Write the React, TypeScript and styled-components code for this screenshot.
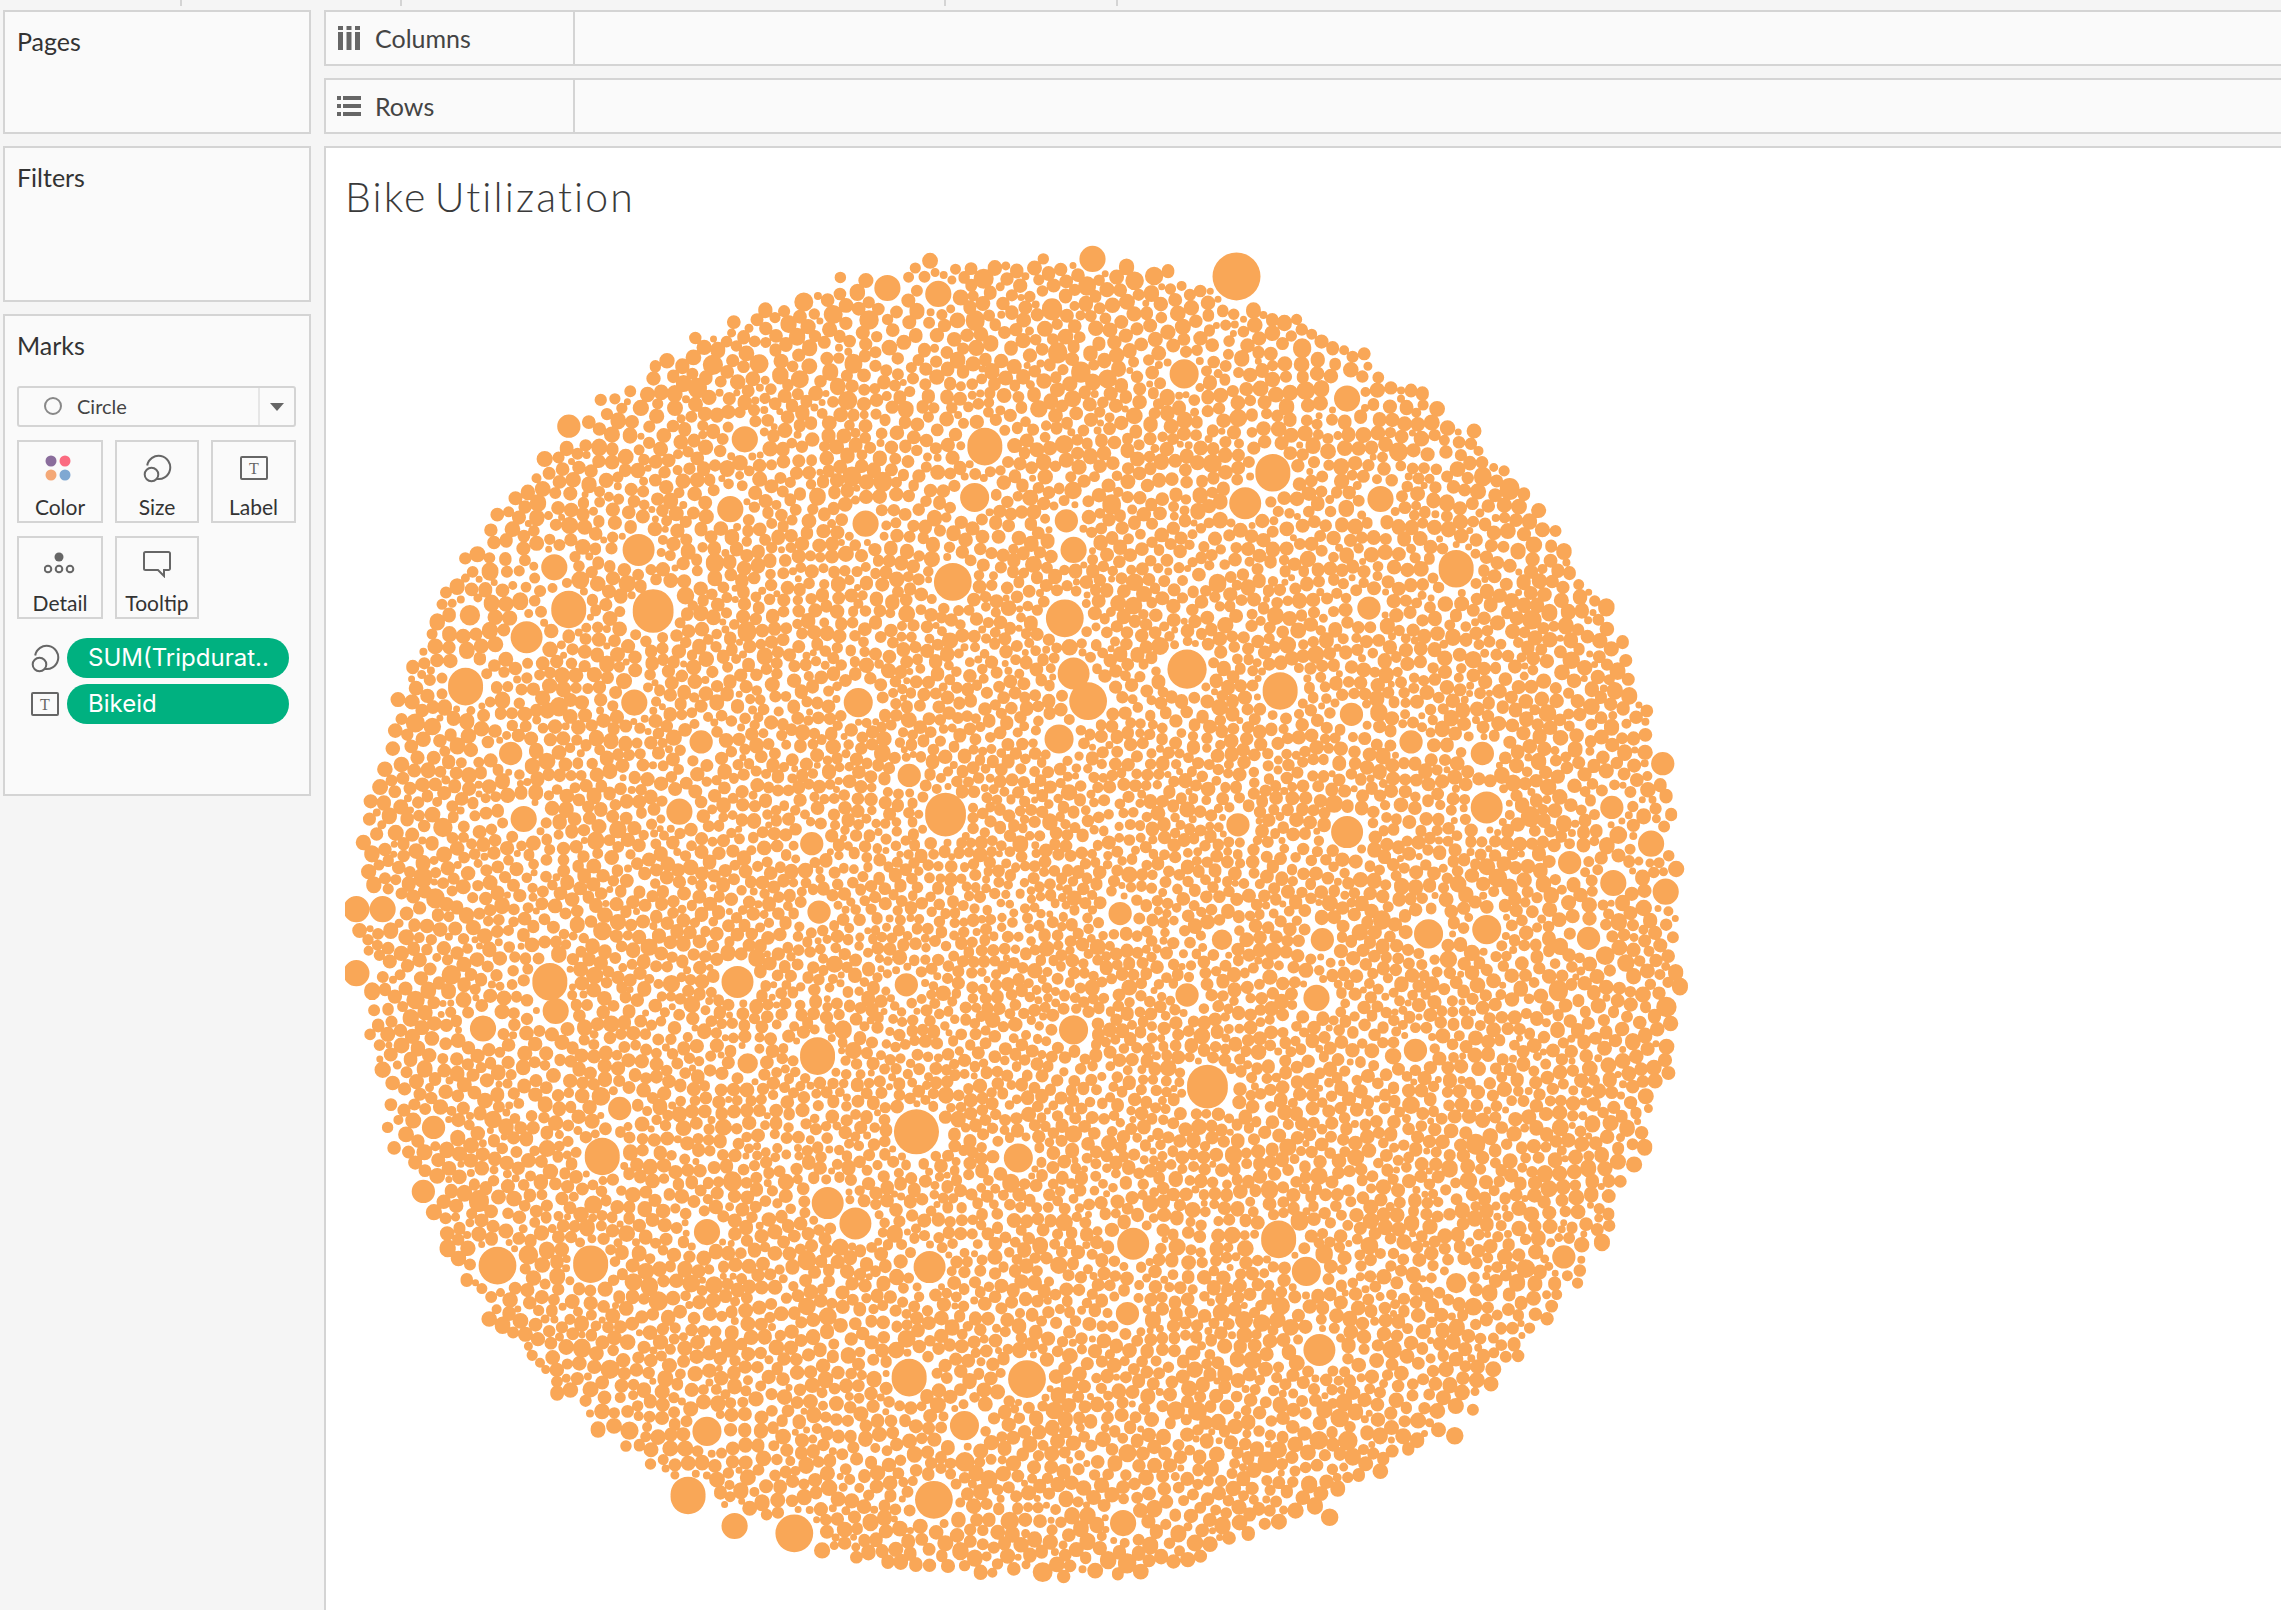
import { useMemo } from 'react';
import styled, { createGlobalStyle } from 'styled-components';

const GlobalStyle = createGlobalStyle`
    html, body {
        margin: 0;
        padding: 0;
        background: #f5f5f5;
        overflow: hidden;
    }
`;

const BORDER = '#d4d4d4';
const INK = '#333333';
const ICON = '#666666';
const ORANGE = '#f9a757';

const Page = styled.div`
    width: 2281px;
    height: 1610px;
    overflow: hidden;
    display: flex;
    flex-direction: column;
    background: #f5f5f5;
    font-family: Lato, 'Open Sans', sans-serif;
    color: ${INK};
`;

const Ruler = styled.div`
    height: 10px;
    display: flex;
    align-items: flex-start;
    flex-shrink: 0;
`;

const Tick = styled.div<{ $gap: number }>`
    width: 2px;
    height: 6px;
    background: ${BORDER};
    margin-left: ${(p) => p.$gap}px;
`;

const Body = styled.div`
    flex: 1;
    display: flex;
    min-height: 0;
`;

const Sidebar = styled.div`
    width: 308px;
    margin-left: 3px;
    margin-right: 13px;
    display: flex;
    flex-direction: column;
    flex-shrink: 0;
`;

const Panel = styled.section<{ $height: number; $gap?: number }>`
    height: ${(p) => p.$height}px;
    margin-bottom: ${(p) => p.$gap ?? 0}px;
    box-sizing: border-box;
    border: 2px solid ${BORDER};
    background: #fafafa;
    padding: 14px 13px 0 12px;
`;

const PanelTitle = styled.div`
    font-size: 25px;
    line-height: 30px;
    color: ${INK};
`;

const MarkSelect = styled.div`
    margin-top: 26px;
    height: 41px;
    box-sizing: border-box;
    border: 2px solid ${BORDER};
    border-radius: 3px;
    display: flex;
    align-items: center;
`;

const MarkSelectValue = styled.div`
    width: 241px;
    height: 100%;
    box-sizing: border-box;
    border-right: 2px solid #e6e6e6;
    padding-left: 24px;
    padding-bottom: 2px;
    display: flex;
    align-items: center;
    gap: 14px;
    font-size: 20px;
    color: #444444;
`;

const MarkSelectArrow = styled.div`
    flex: 1;
    display: flex;
    justify-content: center;
`;

const CardGrid = styled.div`
    margin-top: 13px;
    display: grid;
    grid-template-columns: 86px 84px 85px;
    grid-auto-rows: 83px;
    column-gap: 12px;
    row-gap: 13px;
`;

const Card = styled.div`
    box-sizing: border-box;
    border: 2px solid ${BORDER};
    display: flex;
    flex-direction: column;
    align-items: center;
    padding-top: 8px;
    font-size: 21px;
    line-height: 24px;
    color: ${INK};
`;

const CardIcon = styled.div`
    height: 36px;
    margin-bottom: 9px;
    display: flex;
    align-items: center;
    justify-content: center;
`;

const PillList = styled.div`
    margin-top: 19px;
    display: flex;
    flex-direction: column;
    gap: 6px;
`;

const PillRow = styled.div`
    display: flex;
    align-items: center;
    gap: 7px;
    padding-left: 13px;
`;

const PillIcon = styled.div`
    width: 30px;
    display: flex;
    justify-content: center;
`;

const Pill = styled.div`
    width: 222px;
    height: 40px;
    box-sizing: border-box;
    padding-left: 21px;
    border-radius: 20px;
    background: #00b180;
    color: #ffffff;
    font-family: Inter, Roboto, sans-serif;
    font-size: 24px;
    line-height: 40px;
    white-space: nowrap;
`;

const Main = styled.div`
    flex: 1;
    min-width: 0;
    display: flex;
    flex-direction: column;
`;

const Shelf = styled.div<{ $gap: number }>`
    height: 56px;
    margin-bottom: ${(p) => p.$gap}px;
    flex-shrink: 0;
    box-sizing: border-box;
    border: 2px solid ${BORDER};
    border-right: none;
    background: #fafafa;
    display: flex;
`;

const ShelfLabel = styled.div`
    width: 249px;
    box-sizing: border-box;
    border-right: 2px solid ${BORDER};
    padding-left: 10px;
    padding-bottom: 1px;
    display: flex;
    align-items: center;
    gap: 14px;
    font-size: 25px;
    color: #444444;
`;

const ShelfIcon = styled.div`
    width: 25px;
    display: flex;
    justify-content: center;
`;

const View = styled.div`
    flex: 1;
    min-height: 0;
    box-sizing: border-box;
    border-left: 2px solid ${BORDER};
    border-top: 2px solid ${BORDER};
    background: #ffffff;
    padding: 25px 0 0 19px;
`;

const ViewTitle = styled.h1`
    margin: 0;
    height: 67px;
    font-size: 41px;
    line-height: 48px;
    font-weight: 300;
    color: #3a3a3a;
    letter-spacing: 2.1px;
    word-spacing: -6px;
`;

const Chart = styled.svg`
    display: block;
`;

/* marks that stand out in the packing, x/y/r as read from the shrunk screenshot */
const BIG: number[][] = [
    [850, 190, 16.5], [751, 178, 9], [677, 307, 12], [875, 325, 12], [856, 346, 11], [814, 257, 10],
    [926, 274, 9], [949, 343, 9], [1001, 391, 12], [655, 400, 13], [732, 425, 13], [816, 460, 13.5],
    [880, 475, 12], [738, 463, 11], [748, 482, 13], [590, 483, 10], [728, 508, 10], [650, 560, 14],
    [926, 572, 11], [1022, 555, 11], [449, 420, 14], [391, 419, 12], [362, 438, 11], [320, 472, 12],
    [439, 378, 11], [245, 625, 9], [263, 625, 9], [245, 669, 9], [378, 675, 12], [382, 695, 9],
    [507, 675, 11], [562, 726, 12], [738, 708, 10], [905, 686, 9], [982, 642, 10], [1022, 639, 10],
    [830, 747, 14], [630, 778, 15.5], [700, 796, 10], [414, 795, 12], [569, 827, 11], [588, 841, 11],
    [486, 847, 9], [342, 870, 13], [406, 869, 12], [639, 871, 11], [779, 855, 11], [879, 852, 12],
    [898, 874, 10], [625, 947, 12], [706, 948, 13], [907, 928, 11], [486, 984, 10], [473, 1028, 12],
    [505, 1049, 9], [546, 1054, 13], [642, 1031, 13], [772, 1047, 9], [663, 980, 10], [775, 903, 8],
    [1143, 525, 8], [1135, 580, 9], [1109, 607, 9], [1145, 613, 9], [1092, 645, 8], [1079, 593, 8],
    [467, 558, 9], [360, 563, 9], [351, 518, 8], [436, 483, 9], [381, 390, 9], [323, 423, 7],
    [291, 819, 8], [298, 775, 8], [332, 707, 9], [391, 293, 8], [512, 302, 9], [610, 198, 9],
    [645, 202, 9], [670, 342, 10], [595, 360, 9], [502, 350, 9], [738, 378, 9], [733, 358, 8],
    [941, 418, 8], [929, 491, 8], [482, 510, 8], [625, 533, 8], [558, 580, 8], [563, 627, 8],
    [623, 677, 8], [816, 684, 8], [514, 731, 7], [426, 762, 8], [1108, 555, 8], [1019, 518, 8],
    [970, 510, 8], [973, 722, 8], [1001, 882, 7], [1075, 864, 8], [1000, 987, 6], [914, 1043, 6],
    [851, 567, 8], [770, 628, 8], [840, 646, 7], [909, 646, 8],
];

const SCALE = 2281 / 1568;
// chart svg sits at this page position
const ORIGIN_X = 345;
const ORIGIN_Y = 240;
const CX = 1021 - ORIGIN_X;
const CY = 919 - ORIGIN_Y;
const RADIUS = 676;
const CELL = 18;
const GOLDEN = Math.PI * (3 - Math.sqrt(5));

const random = (seed: number) => () => {
    seed = (seed + 0x6d2b79f5) | 0;
    let t = Math.imul(seed ^ (seed >>> 15), 1 | seed);
    t = (t + Math.imul(t ^ (t >>> 7), 61 | t)) ^ t;
    return ((t ^ (t >>> 14)) >>> 0) / 4294967296;
};

const circleToPath = (x: number, y: number, r: number) =>
    `M${(x - r).toFixed(1)} ${y.toFixed(1)}a${r.toFixed(1)} ${r.toFixed(1)} 0 1 0 ${(2 * r).toFixed(1)} 0a${r.toFixed(1)} ${r.toFixed(1)} 0 1 0 ${(-2 * r).toFixed(1)} 0z`;

type Mark = { x: number; y: number; r: number };

const cellKey = (i: number, j: number) => i * 4096 + j;

const addToGrid = (grid: Map<number, Mark[]>, m: Mark) => {
    const x1 = Math.floor((m.x + m.r) / CELL);
    const y1 = Math.floor((m.y + m.r) / CELL);
    for (let i = Math.floor((m.x - m.r) / CELL); i <= x1; i++) {
        for (let j = Math.floor((m.y - m.r) / CELL); j <= y1; j++) {
            const list = grid.get(cellKey(i, j));
            if (list) list.push(m);
            else grid.set(cellKey(i, j), [m]);
        }
    }
};

// big marks keep a thin white halo, the small ones may touch
const isFree = (grid: Map<number, Mark[]>, x: number, y: number, r: number) => {
    const x1 = Math.floor((x + r + 2) / CELL);
    const y1 = Math.floor((y + r + 2) / CELL);
    for (let i = Math.floor((x - r - 2) / CELL); i <= x1; i++) {
        for (let j = Math.floor((y - r - 2) / CELL); j <= y1; j++) {
            const list = grid.get(cellKey(i, j));
            if (!list) continue;
            for (const o of list) {
                const room = o.r > 9.5 ? o.r + r + 1.5 : (o.r + r) * 0.92;
                if (Math.hypot(o.x - x, o.y - y) < room) return false;
            }
        }
    }
    return true;
};

// jittered spiral, a little relaxing, then small marks go into what is left open
const buildMarks = () => {
    const rand = random(41);
    const big: Mark[] = BIG.map(([x, y, r]) => ({
        x: x * SCALE - ORIGIN_X,
        y: y * SCALE - ORIGIN_Y,
        r: r * SCALE,
    }));

    const small: Mark[] = [];
    let rho = 4;
    let angle = 0;
    while (rho < RADIUS) {
        const t = rho / RADIUS;
        const spacing = 11.4 + 3.6 * t;
        rho += (spacing * spacing) / (2 * Math.PI * rho);
        angle += GOLDEN;
        const a = angle + ((rand() - 0.5) * spacing * 0.8) / rho;
        const rr = rho + (rand() - 0.5) * spacing * 0.8;
        const bump = rand() > 0.92 ? 1.25 : 1;
        small.push({
            x: CX + rr * Math.cos(a),
            y: CY + rr * Math.sin(a),
            r: spacing * (0.37 + 0.18 * rand()) * bump,
        });
    }

    for (let iter = 0; iter < 3; iter++) {
        const grid = new Map<number, Mark[]>();
        for (const m of small) {
            const k = cellKey(Math.floor(m.x / CELL), Math.floor(m.y / CELL));
            const list = grid.get(k);
            if (list) list.push(m);
            else grid.set(k, [m]);
        }
        for (const m of small) {
            const cx = Math.floor(m.x / CELL);
            const cy = Math.floor(m.y / CELL);
            for (let i = cx - 1; i <= cx + 1; i++) {
                for (let j = cy - 1; j <= cy + 1; j++) {
                    const list = grid.get(cellKey(i, j));
                    if (!list) continue;
                    for (const o of list) {
                        if (o === m) continue;
                        const dx = m.x - o.x;
                        const dy = m.y - o.y;
                        const dist = Math.hypot(dx, dy) || 0.01;
                        const overlap = (m.r + o.r) * 0.96 - dist;
                        if (overlap > 0) {
                            const push = (overlap * 0.25) / dist;
                            m.x += dx * push;
                            m.y += dy * push;
                            o.x -= dx * push;
                            o.y -= dy * push;
                        }
                    }
                }
            }
        }
    }

    const placed = new Map<number, Mark[]>();
    big.forEach((b) => addToGrid(placed, b));
    let d = big.map((c) => circleToPath(c.x, c.y, c.r)).join('');
    for (const m of small) {
        // marks under a big one, or past the rim, are dropped
        const buried = big.some((b) => Math.hypot(b.x - m.x, b.y - m.y) < b.r + m.r + 1);
        const edge = Math.hypot(m.x - CX, m.y - CY) + m.r;
        if (!buried && edge < RADIUS - rand() * 14) {
            addToGrid(placed, m);
            d += circleToPath(m.x, m.y, m.r);
        }
    }

    for (let size = 6; size >= 3.5; size -= 0.5) {
        for (let n = 0; n < 30000; n++) {
            const a = rand() * Math.PI * 2;
            const dist = Math.sqrt(rand()) * RADIUS;
            if (dist + size > RADIUS - 16) continue;
            const x = CX + dist * Math.cos(a);
            const y = CY + dist * Math.sin(a);
            if (isFree(placed, x, y, size)) {
                addToGrid(placed, { x, y, r: size });
                d += circleToPath(x, y, size);
            }
        }
    }
    return d;
};

const SvgIcon = styled.svg`
    display: block;
    fill: none;
    stroke: ${ICON};
    stroke-width: 2;
`;

const LabelLetter = styled.text`
    font-family: 'Liberation Serif', serif;
    font-size: 16px;
    fill: ${ICON};
    stroke: none;
    text-anchor: middle;
`;

const ColorIcon = () => (
    <SvgIcon width="30" height="30" viewBox="2 0 30 30" style={{ stroke: 'none' }}>
        <circle cx="8" cy="8" r="5.5" fill="#8a6d9c" />
        <circle cx="22" cy="8" r="5.5" fill="#fb6b80" />
        <circle cx="8" cy="22" r="5.5" fill="#f4a877" />
        <circle cx="22" cy="22" r="5.5" fill="#7fa8d2" />
    </SvgIcon>
);

const SizeIcon = () => (
    <SvgIcon width="30" height="30" viewBox="0 0 30 30">
        <path d="M5.2 12.5a11.6 11.6 0 1 1 8.6 13.2" />
        <circle cx="9.5" cy="21.5" r="6.8" />
    </SvgIcon>
);

const LabelIcon = () => (
    <SvgIcon width="30" height="26" viewBox="0 0 30 26">
        <rect x="2" y="2" width="26" height="22" rx="1" />
        <LabelLetter x="15" y="18.5">
            T
        </LabelLetter>
    </SvgIcon>
);

const DetailIcon = () => (
    <SvgIcon width="32" height="26" viewBox="1 0 32 26">
        <circle cx="16" cy="6" r="4.5" fill={ICON} stroke="none" />
        <circle cx="5" cy="18" r="3.3" />
        <circle cx="16" cy="18" r="3.3" />
        <circle cx="27" cy="18" r="3.3" />
    </SvgIcon>
);

const TooltipIcon = () => (
    <SvgIcon width="30" height="28" viewBox="0 0 30 28">
        <path d="M3.5 2h23a1.5 1.5 0 0 1 1.5 1.5v15a1.5 1.5 0 0 1-1.5 1.5H22v6l-6-6H3.5A1.5 1.5 0 0 1 2 18.5v-15A1.5 1.5 0 0 1 3.5 2z" />
    </SvgIcon>
);

const ColumnsIcon = () => (
    <SvgIcon width="22" height="24" viewBox="0 0 22 24" style={{ stroke: 'none' }}>
        <g fill={ICON}>
            <rect x="0" y="0" width="5" height="4" />
            <rect x="0" y="6" width="5" height="18" />
            <rect x="8.5" y="0" width="5" height="4" />
            <rect x="8.5" y="6" width="5" height="18" />
            <rect x="17" y="0" width="5" height="4" />
            <rect x="17" y="6" width="5" height="18" />
        </g>
    </SvgIcon>
);

const RowsIcon = () => (
    <SvgIcon width="24" height="20" viewBox="0 0 24 20" style={{ stroke: 'none' }}>
        <g fill={ICON}>
            <rect x="0" y="0" width="4" height="4" />
            <rect x="6" y="0" width="18" height="4" />
            <rect x="0" y="8" width="4" height="4" />
            <rect x="6" y="8" width="18" height="4" />
            <rect x="0" y="16" width="4" height="4" />
            <rect x="6" y="16" width="18" height="4" />
        </g>
    </SvgIcon>
);

const cards = [
    { name: 'Color', icon: <ColorIcon /> },
    { name: 'Size', icon: <SizeIcon /> },
    { name: 'Label', icon: <LabelIcon /> },
    { name: 'Detail', icon: <DetailIcon /> },
    { name: 'Tooltip', icon: <TooltipIcon /> },
];

export default function App() {
    const marks = useMemo(buildMarks, []);

    return (
        <Page>
            <GlobalStyle />
            <Ruler>
                <Tick $gap={180} />
                <Tick $gap={218} />
                <Tick $gap={542} />
                <Tick $gap={170} />
            </Ruler>
            <Body>
                <Sidebar>
                    <Panel $height={124} $gap={12}>
                        <PanelTitle>Pages</PanelTitle>
                    </Panel>
                    <Panel $height={156} $gap={12}>
                        <PanelTitle>Filters</PanelTitle>
                    </Panel>
                    <Panel $height={482}>
                        <PanelTitle>Marks</PanelTitle>
                        <MarkSelect>
                            <MarkSelectValue>
                                <SvgIcon width="20" height="20" viewBox="0 0 20 20" style={{ stroke: '#888888' }}>
                                    <circle cx="10" cy="10" r="8" />
                                </SvgIcon>
                                Circle
                            </MarkSelectValue>
                            <MarkSelectArrow>
                                <svg width="14" height="8" viewBox="0 0 14 8">
                                    <path d="M0 0h14L7 8z" fill={ICON} />
                                </svg>
                            </MarkSelectArrow>
                        </MarkSelect>
                        <CardGrid>
                            {cards.map((card) => (
                                <Card key={card.name}>
                                    <CardIcon>{card.icon}</CardIcon>
                                    {card.name}
                                </Card>
                            ))}
                        </CardGrid>
                        <PillList>
                            <PillRow>
                                <PillIcon>
                                    <SizeIcon />
                                </PillIcon>
                                <Pill>SUM(Tripdurat..</Pill>
                            </PillRow>
                            <PillRow>
                                <PillIcon>
                                    <LabelIcon />
                                </PillIcon>
                                <Pill>Bikeid</Pill>
                            </PillRow>
                        </PillList>
                    </Panel>
                </Sidebar>
                <Main>
                    <Shelf $gap={12}>
                        <ShelfLabel>
                            <ShelfIcon>
                                <ColumnsIcon />
                            </ShelfIcon>
                            Columns
                        </ShelfLabel>
                    </Shelf>
                    <Shelf $gap={12}>
                        <ShelfLabel>
                            <ShelfIcon>
                                <RowsIcon />
                            </ShelfIcon>
                            Rows
                        </ShelfLabel>
                    </Shelf>
                    <View>
                        <ViewTitle>Bike Utilization</ViewTitle>
                        <Chart width="1400" height="1370" viewBox="0 0 1400 1370">
                            <path d={marks} fill={ORANGE} />
                        </Chart>
                    </View>
                </Main>
            </Body>
        </Page>
    );
}
